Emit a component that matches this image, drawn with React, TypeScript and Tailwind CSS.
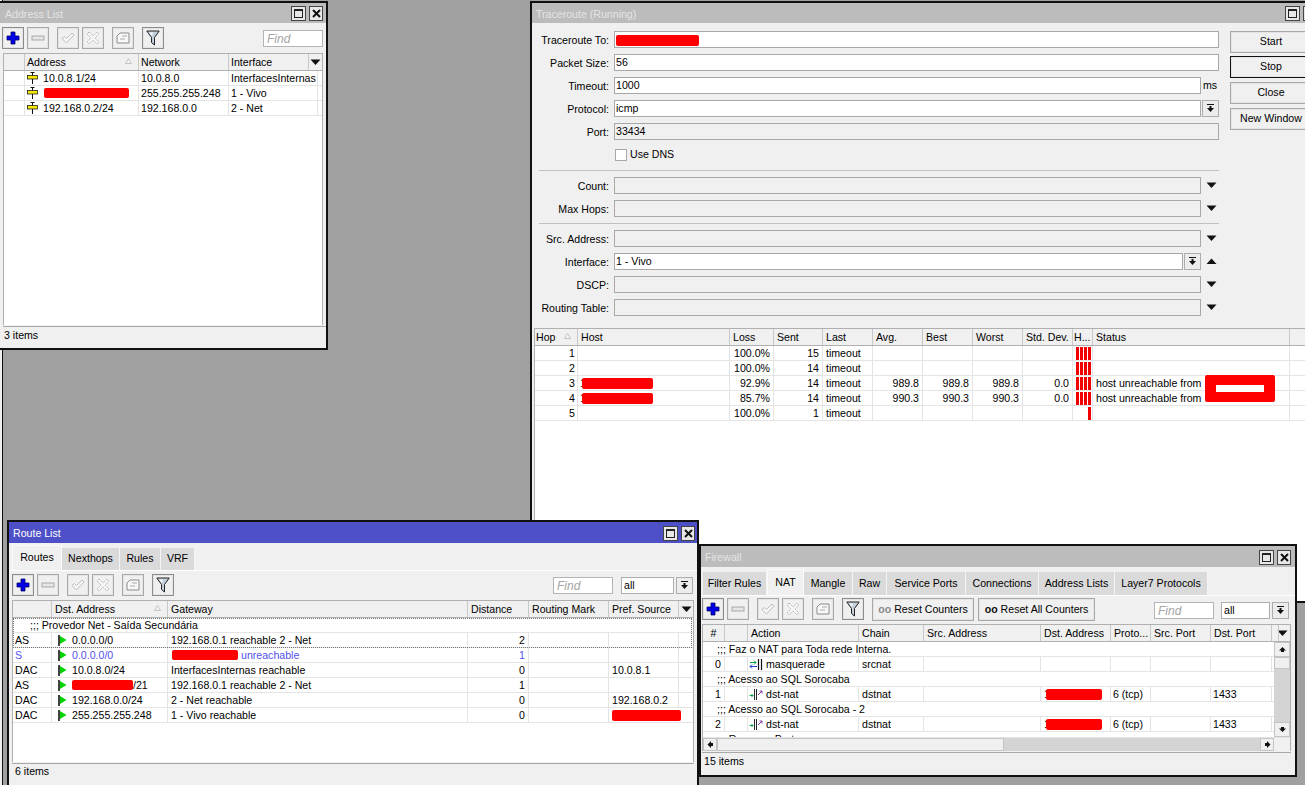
import React from "react";

// column templates, one per table
const ADDR_HEAD = "grid-cols-[21px_114px_90px_80px_1fr]";
const ADDR_ROW = "grid-cols-[21px_114px_90px_89px_1fr]";
const TRACE_COLS = "grid-cols-[43px_152px_44px_49px_50px_50px_50px_50px_50px_20px_197px_1fr]";
const ROUTE_COLS = "grid-cols-[39px_116px_300px_61px_80px_70px_1fr]";
const FW_HEAD = "grid-cols-[22px_23px_111px_65px_117px_70px_40px_60px_61px_2px_1fr]";
const FW_ROW = "grid-cols-[22px_23px_111px_65px_117px_70px_40px_60px_61px_1fr]";

function Triangle({ up }: { up?: boolean }) {
  return (
    <svg width="11" height="7" viewBox="0 0 11 7">
      <path d={up ? "M5.5 0.5 L10.5 6 H0.5 Z" : "M0.5 0.5 H10.5 L5.5 6 Z"} fill="#111" />
    </svg>
  );
}

function SortMark() {
  return (
    <svg width="7" height="6" viewBox="0 0 7 6" className="absolute right-[6px] top-[4px]">
      <path d="M3.5 0.5 L6.5 5.5 H0.5 Z" fill="#f4f4f4" stroke="#c4c4c4" />
    </svg>
  );
}

function DropIcon() {
  return (
    <svg width="9" height="9" viewBox="0 0 9 9">
      <path d="M1 0.5 H8" stroke="#111" strokeWidth="1" />
      <path d="M3.5 2 H5.5 V4 H8 L4.5 8 L1 4 H3.5 Z" fill="#111" />
    </svg>
  );
}

function DropBtn() {
  return (
    <div className="flex h-[17px] w-[17px] shrink-0 items-center justify-center border border-[#adadad] bg-[#ececec]">
      <DropIcon />
    </div>
  );
}

function ToolBtn({ children, dark }: { children: React.ReactNode; dark?: boolean }) {
  return (
    <div
      className={`flex h-[22px] w-[22px] shrink-0 items-center justify-center border bg-[#f0f0f0] shadow-[inset_0_0_0_1px_#e4e4e4] ${
        dark ? "border-[#8c8c8c]" : "border-[#a8a8a8]"
      }`}
    >
      {children}
    </div>
  );
}

function ToolIcons() {
  return (
    <>
      <ToolBtn dark>
        <svg width="14" height="14" viewBox="0 0 14 14">
          <path d="M5 1 H9 V5 H13 V9 H9 V13 H5 V9 H1 V5 H5 Z" fill="#0000e6" stroke="#00006a" strokeWidth="0.8" />
        </svg>
      </ToolBtn>
      <div className="ml-[3px]">
        <ToolBtn>
          <svg width="14" height="6" viewBox="0 0 14 6">
            <rect x="1" y="1" width="12" height="4" fill="#e6e6e6" stroke="#a8a8a8" />
          </svg>
        </ToolBtn>
      </div>
      <div className="ml-[8px]">
        <ToolBtn>
          <svg width="14" height="12" viewBox="0 0 14 12">
            <path d="M1 6.5 L3.5 4.5 L5.5 6.5 L11 1 L13 3 L5.5 11 Z" fill="#f6f6f6" stroke="#bdbdbd" />
          </svg>
        </ToolBtn>
      </div>
      <div className="ml-[3px]">
        <ToolBtn>
          <svg width="14" height="14" viewBox="0 0 14 14">
            <path
              d="M3 1 L7 5 L11 1 L13 3 L9 7 L13 11 L11 13 L7 9 L3 13 L1 11 L5 7 L1 3 Z"
              fill="#f6f6f6"
              stroke="#b4b4b4"
              strokeDasharray="1.5 1"
            />
          </svg>
        </ToolBtn>
      </div>
      <div className="ml-[8px]">
        <ToolBtn>
          <svg width="14" height="12" viewBox="0 0 14 12">
            <path d="M4 1 H13 V11 H1 V4 Z" fill="#f8f8f8" stroke="#8a8a8a" />
            <path d="M6 4 H11 M4 7 H9" stroke="#a8a8a8" />
          </svg>
        </ToolBtn>
      </div>
      <div className="ml-[8px]">
        <ToolBtn dark>
          <svg width="14" height="16" viewBox="0 0 14 16">
            <path d="M0.8 1 H13.2 L8.5 7.5 V15 L5.5 12.5 V7.5 Z" fill="#c6d0dc" stroke="#222" />
            <path d="M3 2.5 H7 L6 6 Z" fill="#f4f6f8" />
          </svg>
        </ToolBtn>
      </div>
    </>
  );
}

function FindBox({ className }: { className: string }) {
  return (
    <div className={`flex h-[17px] items-center border border-[#b4b4b4] bg-white pl-[3px] text-[12px] italic text-[#a4a4a4] ${className}`}>
      Find
    </div>
  );
}

function AddressIcon() {
  return (
    <svg width="11" height="12" viewBox="0 0 11 12" className="mr-[5px] shrink-0">
      <path d="M5.5 0 V12 M3.5 0.5 H7.5" stroke="#111" />
      <rect x="0.5" y="3.5" width="10" height="3.5" fill="#f5e800" stroke="#222" strokeWidth="0.8" />
    </svg>
  );
}

function RouteFlag() {
  return (
    <svg width="9" height="11" viewBox="0 0 9 11" className="ml-[3px] mr-[5px] shrink-0">
      <path d="M1 0 V11" stroke="#111" strokeWidth="1.6" />
      <path d="M2 1 L8.5 5 L2 9 Z" fill="#00d400" />
    </svg>
  );
}

function MasqIcon() {
  return (
    <svg width="14" height="11" viewBox="0 0 14 11" className="mr-[3px] shrink-0">
      <path d="M1 3.5 H7 M5 1.5 L7 3.5 L5 5.5" stroke="#00a040" fill="none" />
      <path d="M8 7.5 H1 M3 5.5 L1 7.5 L3 9.5" stroke="#2040d0" fill="none" />
      <path d="M9.5 0 V11 M12.5 0 V11" stroke="#111" strokeWidth="1.2" />
    </svg>
  );
}

function DstIcon() {
  return (
    <svg width="14" height="11" viewBox="0 0 14 11" className="mr-[3px] shrink-0">
      <path d="M0.5 6.5 H4 M2.5 5 L4 6.5 L2.5 8" stroke="#10a050" fill="none" />
      <path d="M5.5 0 V11 M7.5 0 V11" stroke="#111" strokeWidth="0.9" />
      <path d="M9 6 L13 2 M10.5 2 H13 V4.5" stroke="#8040a0" fill="none" />
    </svg>
  );
}

function Red({ className }: { className: string }) {
  return <span className={`inline-block shrink-0 rounded-[2px] bg-[#fe0000] ${className}`} />;
}

function Cell({ children, className = "" }: { children?: React.ReactNode; className?: string }) {
  return (
    <div className={`flex h-[14px] items-center overflow-hidden whitespace-nowrap border-r border-[#e4e4e4] px-[3px] leading-[14px] ${className}`}>
      {children}
    </div>
  );
}

function Head({ children, className = "" }: { children?: React.ReactNode; className?: string }) {
  return (
    <div className={`relative flex h-[16px] items-center overflow-hidden whitespace-nowrap border-r border-[#c8c8c8] px-[3px] pt-[1px] ${className}`}>
      {children}
    </div>
  );
}

function Row({ cols, children, className = "" }: { cols: string; children: React.ReactNode; className?: string }) {
  return <div className={`grid h-[15px] border-b border-[#e4e4e4] ${cols} ${className}`}>{children}</div>;
}

function Comment({ pad, children }: { pad: string; children: React.ReactNode }) {
  return (
    <div className={`h-[15px] whitespace-nowrap border-b border-[#e4e4e4] leading-[14px] ${pad}`}>{children}</div>
  );
}

function Window({
  title,
  active,
  className,
  titleClass = "h-[20px] pl-[4px] pr-[1px]",
  textClass = "pt-[4px]",
  children,
}: {
  title: string;
  active?: boolean;
  className: string;
  titleClass?: string;
  textClass?: string;
  children: React.ReactNode;
}) {
  return (
    <div className={`absolute flex flex-col border-2 border-[#111] bg-[#f0f0f0] ${className}`}>
      <div
        className={`flex shrink-0 items-center justify-between ${titleClass} ${
          active ? "bg-[#4e50c8] text-white" : "bg-[#bcbcbc] text-[#e4e4e4]"
        }`}
      >
        <span className={textClass}>{title}</span>
        <div className="flex gap-[3px] pt-[1px]">
          <div className="flex h-[15px] w-[15px] items-center justify-center border border-[#444] bg-[#e8e8e8]">
            <div className="h-[9px] w-[9px] border border-[#222] border-t-2" />
          </div>
          <div className="flex h-[15px] w-[14px] items-center justify-center border border-[#444] bg-[#e8e8e8]">
            <svg width="9" height="9" viewBox="0 0 9 9">
              <path d="M1 1 L8 8 M8 1 L1 8" stroke="#111" strokeWidth="2" />
            </svg>
          </div>
        </div>
      </div>
      {children}
    </div>
  );
}

function AddressList() {
  const rows = [
    { addr: "10.0.8.1/24", net: "10.0.8.0", iface: "InterfacesInternas" },
    { addr: "", net: "255.255.255.248", iface: "1 - Vivo" },
    { addr: "192.168.0.2/24", net: "192.168.0.0", iface: "2 - Net" },
  ];
  return (
    <Window title="Address List" titleClass="h-[20px] pl-[7px] pr-[3px]" className="left-[-4px] top-[1px] z-20 h-[349px] w-[332px]">
      <div className="flex h-[30px] shrink-0 items-start pl-[4px] pr-[3px] pt-[4px]">
        <ToolIcons />
        <FindBox className="ml-auto mt-[3px] w-[60px]" />
      </div>
      <div className="ml-[5px] mr-[3px] flex-1 overflow-hidden border-l border-t border-r border-[#b0b0b0] bg-white">
        <div className={`grid border-b border-[#b0b0b0] bg-[#f0f0f0] ${ADDR_HEAD}`}>
          <Head />
          <Head className="pl-[2px]">
            Address
            <SortMark />
          </Head>
          <Head className="pl-[2px]">Network</Head>
          <Head className="pl-[2px]">Interface</Head>
          <div className="flex items-center justify-center">
            <Triangle />
          </div>
        </div>
        {rows.map((r) => (
          <Row key={r.net} cols={ADDR_ROW}>
            <Cell />
            <Cell className="pl-[2px]">
              <AddressIcon />
              {r.addr ? r.addr : <Red className="ml-[1px] h-[10px] w-[85px]" />}
            </Cell>
            <Cell className="pl-[2px]">{r.net}</Cell>
            <Cell className="pl-[2px]">{r.iface}</Cell>
            <div />
          </Row>
        ))}
      </div>
      <div className="ml-[5px] mt-[1px] flex h-[19px] shrink-0 items-center border-t border-[#a8a8a8] pl-[1px]">3 items</div>
      <div className="h-[3px] shrink-0" />
    </Window>
  );
}

function FormRow({ label, children }: { label: string; children: React.ReactNode }) {
  return (
    <div className="mb-[6px] flex h-[17px] items-center">
      <div className="w-[77px] shrink-0 whitespace-nowrap pt-[2px] text-right">{label}</div>
      <div className="ml-[5px] flex h-[17px] flex-1 items-center">{children}</div>
    </div>
  );
}

function Input({ value, off, red }: { value?: string; off?: boolean; red?: boolean }) {
  return (
    <div className={`flex h-[17px] flex-1 items-center border border-[#a8a8a8] pl-[1px] pt-[1px] ${off ? "bg-[#f0f0f0]" : "bg-white"}`}>
      {red ? <Red className="h-[11px] w-[83px] rounded-[1px]" /> : value}
    </div>
  );
}

function Trailing({ children }: { children: React.ReactNode }) {
  return <div className="flex w-[18px] shrink-0 items-center justify-end pr-[2px]">{children}</div>;
}

function SideBtn({ label, main, className }: { label: string; main?: boolean; className: string }) {
  return (
    <div
      className={`flex h-[22px] w-[82px] items-center justify-center border bg-[#f0f0f0] shadow-[inset_0_0_0_1px_#e4e4e4] ${className} ${
        main ? "border-[#111]" : "border-[#a8a8a8]"
      }`}
    >
      {label}
    </div>
  );
}

function Bars({ n }: { n: number }) {
  return (
    <div className="flex h-[14px] items-center justify-end gap-[1px] border-r border-[#e4e4e4] pr-[1px]">
      {Array.from({ length: n }).map((_, i) => (
        <div key={i} className="h-[13px] w-[3px] bg-[#f20000]" />
      ))}
    </div>
  );
}

function Traceroute() {
  const rows = [
    { hop: "1", loss: "100.0%", sent: "15", bars: 4 },
    { hop: "2", loss: "100.0%", sent: "14", bars: 4 },
    { hop: "3", loss: "92.9%", sent: "14", avg: "989.8", std: "0.0", bars: 4, host: true },
    { hop: "4", loss: "85.7%", sent: "14", avg: "990.3", std: "0.0", bars: 4, host: true },
    { hop: "5", loss: "100.0%", sent: "1", bars: 1 },
  ];
  return (
    <Window title="Traceroute (Running)" titleClass="h-[20px] pl-[4px] pr-[11px]" className="left-[530px] top-[1px] z-0 h-[602px] w-[800px]">
      <div className="flex shrink-0">
        <div className="w-[687px] shrink-0 pt-[8px]">
          <FormRow label="Traceroute To:">
            <Input red />
          </FormRow>
          <FormRow label="Packet Size:">
            <Input value="56" />
          </FormRow>
          <FormRow label="Timeout:">
            <Input value="1000" />
            <div className="w-[18px] shrink-0 pl-[2px]">ms</div>
          </FormRow>
          <FormRow label="Protocol:">
            <Input value="icmp" />
            <div className="ml-[1px]">
              <DropBtn />
            </div>
          </FormRow>
          <FormRow label="Port:">
            <Input value="33434" off />
          </FormRow>
          <div className="flex h-[17px] items-center pl-[83px]">
            <div className="h-[12px] w-[12px] border border-[#a8a8a8] bg-white" />
            <span className="ml-[3px] pt-[1px]">Use DNS</span>
          </div>
          <div className="ml-[7px] mb-[6px] mt-[7px] border-t border-[#c0c0c0]" />
          <FormRow label="Count:">
            <Input off />
            <Trailing>
              <Triangle />
            </Trailing>
          </FormRow>
          <FormRow label="Max Hops:">
            <Input off />
            <Trailing>
              <Triangle />
            </Trailing>
          </FormRow>
          <div className="mb-[6px] ml-[7px] mt-[1px] border-t border-[#c0c0c0]" />
          <FormRow label="Src. Address:">
            <Input off />
            <Trailing>
              <Triangle />
            </Trailing>
          </FormRow>
          <FormRow label="Interface:">
            <Input value="1 - Vivo" />
            <div className="ml-[1px]">
              <DropBtn />
            </div>
            <Trailing>
              <Triangle up />
            </Trailing>
          </FormRow>
          <FormRow label="DSCP:">
            <Input off />
            <Trailing>
              <Triangle />
            </Trailing>
          </FormRow>
          <FormRow label="Routing Table:">
            <Input off />
            <Trailing>
              <Triangle />
            </Trailing>
          </FormRow>
        </div>
        <div className="ml-[11px] flex flex-col pt-[8px]">
          <SideBtn label="Start" className="" />
          <SideBtn label="Stop" main className="mt-[3px]" />
          <SideBtn label="Close" className="mt-[4px]" />
          <SideBtn label="New Window" className="mt-[4px]" />
        </div>
      </div>
      <div className="relative ml-[2px] mt-[6px] flex-1 border-l border-t border-[#b0b0b0] bg-white">
        <div className={`grid border-b border-[#b0b0b0] bg-[#f0f0f0] ${TRACE_COLS}`}>
          <Head className="pl-[1px]">
            Hop
            <SortMark />
          </Head>
          <Head>Host</Head>
          <Head>Loss</Head>
          <Head>Sent</Head>
          <Head>Last</Head>
          <Head>Avg.</Head>
          <Head>Best</Head>
          <Head>Worst</Head>
          <Head>Std. Dev.</Head>
          <Head className="pl-[1px]">H...</Head>
          <Head>Status</Head>
          <Head />
        </div>
        {rows.map((r) => (
          <Row key={r.hop} cols={TRACE_COLS}>
            <Cell className="justify-end pr-[2px]">{r.hop}</Cell>
            <Cell className="pl-[2px]">
              {r.host && (
                <>
                  <span className="w-[1px]">1</span>
                  <Red className="ml-[1px] h-[11px] w-[71px]" />
                </>
              )}
            </Cell>
            <Cell className="justify-end">{r.loss}</Cell>
            <Cell className="justify-end">{r.sent}</Cell>
            <Cell>timeout</Cell>
            <Cell className="justify-end">{r.avg}</Cell>
            <Cell className="justify-end">{r.avg}</Cell>
            <Cell className="justify-end">{r.avg}</Cell>
            <Cell className="justify-end">{r.std}</Cell>
            <Bars n={r.bars} />
            <Cell>{r.host && "host unreachable from"}</Cell>
            <Cell />
          </Row>
        ))}
        {/* redaction painted across the two status cells */}
        <div className="absolute left-[670px] top-[46px] flex h-[27px] w-[70px] items-center justify-center rounded-[2px] bg-[#fe0000]">
          <div className="h-[7px] w-[48px] bg-white" />
        </div>
      </div>
    </Window>
  );
}

function Tab({ label, active, className }: { label: string; active?: boolean; className: string }) {
  return (
    <div
      className={`flex items-center justify-center border-r border-[#f4f4f4] ${className} ${
        active ? "bg-[#f0f0f0] border-l border-t border-[#fafafa]" : "mt-[3px] bg-[#dadada]"
      }`}
    >
      {label}
    </div>
  );
}

function RouteList() {
  const S = "text-[#5252ee]";
  return (
    <Window title="Route List" active titleClass="h-[21px] pl-[4px] pr-[2px]" textClass="pt-[2px]" className="left-[7px] top-[520px] z-30 h-[270px] w-[692px]">
      <div className="ml-[3px] mt-[2px] flex h-[25px] shrink-0">
        <Tab label="Routes" active className="w-[50px]" />
        <Tab label="Nexthops" className="w-[58px]" />
        <Tab label="Rules" className="w-[41px]" />
        <Tab label="VRF" className="w-[34px]" />
      </div>
      <div className="flex flex-1 flex-col border-t border-white">
        <div className="flex h-[29px] shrink-0 items-start pl-[3px] pr-[4px] pt-[3px]">
          <ToolIcons />
          <FindBox className="ml-auto mt-[3px] w-[60px]" />
          <div className="ml-[8px] mt-[3px] flex h-[17px] w-[53px] items-center border border-[#adadad] bg-white pl-[2px]">all</div>
          <div className="ml-[2px] mt-[3px]">
            <DropBtn />
          </div>
        </div>
        <div className="ml-[3px] mr-[3px] h-[162px] shrink-0 overflow-hidden border-l border-r border-t border-[#b0b0b0] bg-white">
          <div className={`grid border-b border-[#b0b0b0] bg-[#f0f0f0] ${ROUTE_COLS}`}>
            <Head />
            <Head>
              Dst. Address
              <SortMark />
            </Head>
            <Head>Gateway</Head>
            <Head>Distance</Head>
            <Head>Routing Mark</Head>
            <Head>Pref. Source</Head>
            <div className="flex items-center justify-center">
              <Triangle />
            </div>
          </div>
          <div className="relative">
            <Comment pad="pl-[17px]">;;; Provedor Net - Saída Secundária</Comment>
            <Row cols={ROUTE_COLS}>
              <Cell className="pl-[2px]">AS</Cell>
              <Cell>
                <RouteFlag />
                0.0.0.0/0
              </Cell>
              <Cell>192.168.0.1 reachable 2 - Net</Cell>
              <Cell className="justify-end">2</Cell>
              <Cell />
              <Cell />
              <div />
            </Row>
            <div className="pointer-events-none absolute inset-y-0 left-0 right-[1px] border border-dotted border-[#777]" />
          </div>
          <Row cols={ROUTE_COLS} className={S}>
            <Cell className="pl-[2px]">S</Cell>
            <Cell>
              <RouteFlag />
              0.0.0.0/0
            </Cell>
            <Cell>
              <Red className="ml-[1px] mr-[3px] h-[10px] w-[66px]" />
              unreachable
            </Cell>
            <Cell className="justify-end">1</Cell>
            <Cell />
            <Cell />
            <div />
          </Row>
          <Row cols={ROUTE_COLS}>
            <Cell className="pl-[2px]">DAC</Cell>
            <Cell>
              <RouteFlag />
              10.0.8.0/24
            </Cell>
            <Cell>InterfacesInternas reachable</Cell>
            <Cell className="justify-end">0</Cell>
            <Cell />
            <Cell>10.0.8.1</Cell>
            <div />
          </Row>
          <Row cols={ROUTE_COLS}>
            <Cell className="pl-[2px]">AS</Cell>
            <Cell>
              <RouteFlag />
              <Red className="h-[10px] w-[61px]" />
              /21
            </Cell>
            <Cell>192.168.0.1 reachable 2 - Net</Cell>
            <Cell className="justify-end">1</Cell>
            <Cell />
            <Cell />
            <div />
          </Row>
          <Row cols={ROUTE_COLS}>
            <Cell className="pl-[2px]">DAC</Cell>
            <Cell>
              <RouteFlag />
              192.168.0.0/24
            </Cell>
            <Cell>2 - Net reachable</Cell>
            <Cell className="justify-end">0</Cell>
            <Cell />
            <Cell>192.168.0.2</Cell>
            <div />
          </Row>
          <Row cols={ROUTE_COLS}>
            <Cell className="pl-[2px]">DAC</Cell>
            <Cell>
              <RouteFlag />
              255.255.255.248
            </Cell>
            <Cell>1 - Vivo reachable</Cell>
            <Cell className="justify-end">0</Cell>
            <Cell />
            <div className="col-span-2 flex h-[14px] items-center overflow-visible pl-[3px]">
              <Red className="h-[11px] w-[69px]" />
            </div>
          </Row>
        </div>
        <div className="ml-[3px] mr-[3px] mt-[1px] flex h-[17px] shrink-0 items-center border-t border-[#a8a8a8] pl-[3px]">6 items</div>
      </div>
    </Window>
  );
}

function ScrollArrow({ d, className }: { d: string; className: string }) {
  return (
    <div className={`flex shrink-0 items-center justify-center border border-[#c4c4c4] bg-[#f0f0f0] ${className}`}>
      <svg width="9" height="9" viewBox="0 0 9 9">
        <path d={d} fill="#111" />
      </svg>
    </div>
  );
}

function ResetBtn({ label, on, className }: { label: string; on?: boolean; className: string }) {
  return (
    <div
      className={`flex h-[23px] items-center justify-center border border-[#a8a8a8] bg-[#f0f0f0] shadow-[inset_0_0_0_1px_#e4e4e4] ${className}`}
    >
      <b className={`mr-[3px] ${on ? "text-[#111]" : "text-[#8a8a8a]"}`}>oo</b>
      {label}
    </div>
  );
}

function Firewall() {
  const NatRow = ({ n, masq }: { n: string; masq?: boolean }) => (
    <Row cols={FW_ROW}>
      <Cell className="justify-end">{n}</Cell>
      <Cell />
      <Cell className="pl-[1px]">
        {masq ? <MasqIcon /> : <DstIcon />}
        {masq ? "masquerade" : "dst-nat"}
      </Cell>
      <Cell>{masq ? "srcnat" : "dstnat"}</Cell>
      <Cell />
      <Cell>
        {!masq && (
          <>
            <span className="w-[1px]">1</span>
            <Red className="ml-[1px] h-[11px] w-[56px]" />
          </>
        )}
      </Cell>
      <Cell className="pl-[2px]">{masq ? "" : "6 (tcp)"}</Cell>
      <Cell />
      <Cell className="pl-[2px]">{masq ? "" : "1433"}</Cell>
      <div />
    </Row>
  );
  return (
    <Window title="Firewall" titleClass="h-[21px] pl-[4px] pr-[4px]" textClass="pt-[2px]" className="left-[699px] top-[544px] z-40 h-[233px] w-[598px]">
      <div className="ml-[2px] mt-[2px] flex h-[26px] shrink-0">
        <Tab label="Filter Rules" className="w-[64px]" />
        <Tab label="NAT" active className="w-[37px]" />
        <Tab label="Mangle" className="w-[49px]" />
        <Tab label="Raw" className="w-[34px]" />
        <Tab label="Service Ports" className="w-[79px]" />
        <Tab label="Connections" className="w-[73px]" />
        <Tab label="Address Lists" className="w-[76px]" />
        <Tab label="Layer7 Protocols" className="w-[93px]" />
      </div>
      <div className="flex flex-1 flex-col border-t border-white">
        <div className="flex h-[28px] shrink-0 items-start pl-[1px] pr-[6px] pt-[2px]">
          <ToolIcons />
          <ResetBtn label="Reset Counters" className="ml-[8px] w-[102px]" />
          <ResetBtn label="Reset All Counters" on className="ml-[4px] w-[117px]" />
          <FindBox className="ml-auto mt-[4px] w-[60px]" />
          <div className="ml-[7px] mt-[4px] flex h-[17px] w-[49px] items-center border border-[#adadad] bg-white pl-[2px]">all</div>
          <div className="ml-[2px] mt-[4px]">
            <DropBtn />
          </div>
        </div>
        <div className="ml-[1px] mr-[4px] shrink-0 border-l border-t border-r border-[#b0b0b0] bg-white">
          <div className={`grid border-b border-[#b0b0b0] bg-[#f0f0f0] ${FW_HEAD}`}>
            <Head className="justify-center">#</Head>
            <Head />
            <Head>Action</Head>
            <Head>Chain</Head>
            <Head>Src. Address</Head>
            <Head>Dst. Address</Head>
            <Head>Proto...</Head>
            <Head>Src. Port</Head>
            <Head>Dst. Port</Head>
            <Head className="px-0" />
            <div className="flex items-center justify-center">
              <Triangle />
            </div>
          </div>
          <div className="flex h-[95px]">
            <div className="min-w-0 flex-1 overflow-hidden">
              <Comment pad="pl-[14px]">;;; Faz o NAT para Toda rede Interna.</Comment>
              <NatRow n="0" masq />
              <Comment pad="pl-[14px]">;;; Acesso ao SQL Sorocaba</Comment>
              <NatRow n="1" />
              <Comment pad="pl-[14px]">;;; Acesso ao SQL Sorocaba - 2</Comment>
              <NatRow n="2" />
              <Comment pad="pl-[14px]">;;; Remover Porta</Comment>
            </div>
            <div className="flex w-[16px] shrink-0 flex-col bg-[#d4d4d4]">
              <ScrollArrow d="M4.5 2 L8 5.5 H6 V7 H3 V5.5 H1 Z" className="h-[15px]" />
              <div className="h-[12px] shrink-0 border border-[#c4c4c4] bg-[#f0f0f0]" />
              <div className="flex-1" />
              <ScrollArrow d="M3 2 H6 V3.5 H8 L4.5 7 L1 3.5 H3 Z" className="h-[15px]" />
            </div>
          </div>
          <div className="flex h-[14px] border-t border-[#e4e4e4]">
            <ScrollArrow d="M1.5 4.5 L5 1 V3 H7 V6 H5 V8 Z" className="w-[14px]" />
            <div className="w-[287px] shrink-0 border border-[#c4c4c4] bg-[#f0f0f0]" />
            <div className="flex-1 bg-[#d4d4d4]" />
            <ScrollArrow d="M7.5 4.5 L4 1 V3 H2 V6 H4 V8 Z" className="w-[14px]" />
            <div className="w-[16px] shrink-0 bg-[#f0f0f0]" />
          </div>
        </div>
        <div className="ml-[1px] mr-[4px] mt-[1px] flex h-[18px] shrink-0 items-center border-t border-[#a8a8a8] pl-[2px]">15 items</div>
      </div>
    </Window>
  );
}

export default function App() {
  return (
    <div className="relative h-[785px] w-[1305px] overflow-hidden bg-[#a0a0a0] font-['Liberation_Sans',sans-serif] text-[10.6px] text-black">
      {/* edge of a window left of the screen */}
      <div className="absolute inset-y-0 left-0 w-[3px] border-r border-[#111] bg-[#f0f0f0]" />
      <Traceroute />
      <AddressList />
      <RouteList />
      <Firewall />
    </div>
  );
}
